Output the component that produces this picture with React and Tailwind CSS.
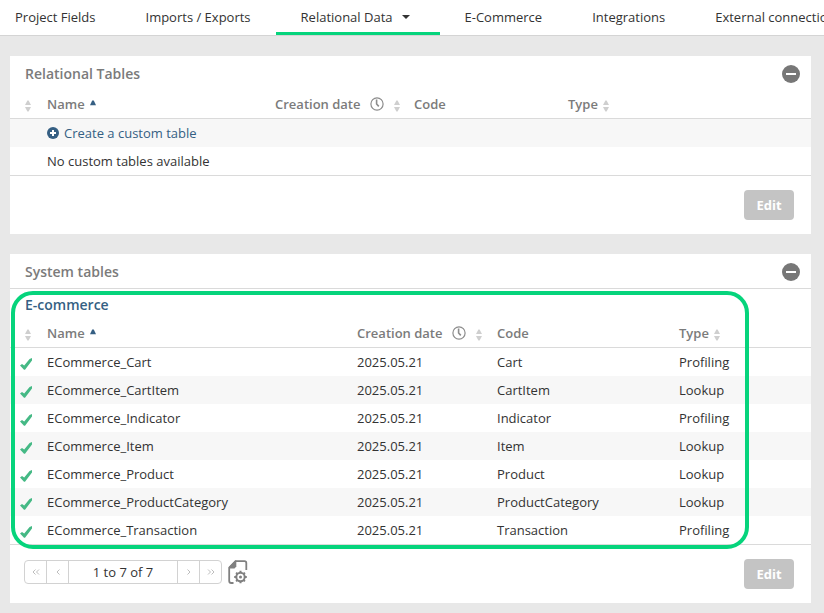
import React, { useState } from 'react';

const TABS = [
    { id: 'fields', name: 'Project Fields' },
    { id: 'imports', name: 'Imports / Exports' },
    { id: 'relational', name: 'Relational Data', hasMenu: true },
    { id: 'ecommerce', name: 'E-Commerce' },
    { id: 'integrations', name: 'Integrations' },
    { id: 'external', name: 'External connections' }
];

const SYSTEM_TABLES = [
    { code: 'Cart', date: '2025.05.21', type: 'Profiling' },
    { code: 'CartItem', date: '2025.05.21', type: 'Lookup' },
    { code: 'Indicator', date: '2025.05.21', type: 'Profiling' },
    { code: 'Item', date: '2025.05.21', type: 'Lookup' },
    { code: 'Product', date: '2025.05.21', type: 'Lookup' },
    { code: 'ProductCategory', date: '2025.05.21', type: 'Lookup' },
    { code: 'Transaction', date: '2025.05.21', type: 'Profiling' }
];

// --- Icons ---
const SortIcon = () => (
    <svg className="w-[6px] h-[12px] shrink-0" viewBox="0 0 6 12" fill="#cfcfcf" aria-hidden="true">
        <path d="M2.4 0.5 H3.6 L6 5 H0 Z M0 7 H6 L3.6 11.5 H2.4 Z" />
    </svg>
);

const SortUpIcon = () => (
    <svg className="w-[6px] h-[6px] shrink-0" viewBox="0 0 6 6" fill="#355f83" aria-hidden="true">
        <path d="M2.2 0.5 H3.8 L6 5.2 H0 Z" />
    </svg>
);

const ClockIcon = () => (
    <svg className="w-[14px] h-[14px] shrink-0" viewBox="0 0 14 14" fill="none" stroke="#8c8c8c" aria-hidden="true">
        <circle cx="7" cy="7" r="6.1" strokeWidth="1.2" />
        <path d="M6.6 2.6 V7 L8.8 9.4" strokeWidth="1.6" />
    </svg>
);

const CheckIcon = () => (
    <svg className="w-[12px] h-[12px]" viewBox="0 0 12 12" fill="#45b985" role="img" aria-label="Active">
        <path d="M0 7.4 L2 6 L4.2 7.6 L9.6 1 L12 0 V2.6 L5 11.8 H4 Z" />
    </svg>
);

const PlusIcon = () => (
    <svg className="w-[12px] h-[12px] shrink-0" viewBox="0 0 12 12" aria-hidden="true">
        <circle cx="6" cy="6" r="6" fill="#355f83" />
        <path d="M6 3 V9 M3 6 H9" stroke="#fff" strokeWidth="2" />
    </svg>
);

const CollapseIcon = () => (
    <svg className="w-[18px] h-[18px]" viewBox="0 0 18 18" aria-hidden="true">
        <circle cx="9" cy="9" r="9" fill="#777" />
        <path d="M4 9 H14" stroke="#fff" strokeWidth="2" />
    </svg>
);

const PageSettingsIcon = () => (
    <svg className="w-[20px] h-[24px]" viewBox="0 0 20 24" fill="none" stroke="#808080" aria-hidden="true">
        <path d="M5.5 23 H3.2 Q1.2 23 1.2 21 V7.5 L7.5 1.1 H16.5 Q18.3 1.1 18.3 3 V10" strokeWidth="1.8" />
        <path d="M1 8.5 V7 L7.3 0.6 H8.3 V6.5 L6.5 8.5 Z" fill="#808080" stroke="none" />
        <circle cx="12.5" cy="17" r="4.2" strokeWidth="2" />
        <circle cx="12.5" cy="17" r="1.5" fill="#808080" stroke="none" />
        <path
            d="M12.5 10.8 V13 M12.5 21 V23.2 M6.2 17 H8.5 M16.5 17 H18.8 M8.1 12.6 L9.7 14.2 M15.3 19.8 L16.9 21.4 M8.1 21.4 L9.7 19.8 M15.3 14.2 L16.9 12.6"
            strokeWidth="2"
        />
    </svg>
);

const Chevron = ({ double, left }) => (
    <svg
        className={left ? 'w-[8px] h-[6px] rotate-180' : 'w-[8px] h-[6px]'}
        viewBox="0 0 8 6"
        fill="none"
        stroke="#bdbdbd"
        aria-hidden="true"
    >
        <path d={double ? 'M1 0.5 L3.5 3 L1 5.5 M4.5 0.5 L7 3 L4.5 5.5' : 'M2.5 0.5 L5 3 L2.5 5.5'} />
    </svg>
);

// --- Panel pieces ---
const Panel = ({ title, children, ruled }) => {
    const [isOpen, setIsOpen] = useState(true);

    return (
        <section className="bg-white">
            <header
                className={`flex items-center justify-between pl-[15px] pr-[11px] pt-[2px] ${ruled ? 'h-[35px] border-b border-[#dadada]' : 'h-[34px]'}`}
            >
                <h2 className="text-[14px] leading-[20px] font-semibold text-[#7b7b7b]">{title}</h2>
                <button type="button" aria-label={`Collapse ${title}`} onClick={() => setIsOpen(!isOpen)}>
                    <CollapseIcon />
                </button>
            </header>
            {isOpen && children}
        </section>
    );
};

const HeaderRow = () => (
    <thead>
        <tr className="h-[29px] text-left text-[#7b7b7b] *:border-b *:border-[#dadada]">
            <th className="p-0 pl-[15px]">
                <button type="button" aria-label="Sort by status" className="flex pt-[3px]">
                    <SortIcon />
                </button>
            </th>
            <th className="p-0 font-semibold">
                <button type="button" className="flex items-center gap-[5px]">
                    Name
                    <span className="pb-[3px]"><SortUpIcon /></span>
                </button>
            </th>
            <th className="p-0 font-semibold">
                <button type="button" className="flex items-center gap-[10px] whitespace-nowrap">
                    Creation date
                    <ClockIcon />
                    <span className="pt-[3px]"><SortIcon /></span>
                </button>
            </th>
            <th className="p-0 font-semibold">Code</th>
            <th className="p-0 font-semibold">
                <button type="button" className="flex items-center gap-[5px]">
                    Type
                    <span className="pt-[3px]"><SortIcon /></span>
                </button>
            </th>
        </tr>
    </thead>
);

const EditButton = () => (
    <button type="button" className="ml-auto h-[30px] w-[50px] rounded-[4px] bg-[#c4c4c4] font-bold text-white">
        Edit
    </button>
);

const Pager = () => (
    <div className="flex h-[24px] divide-x divide-[#d2d2d2] rounded-[4px] border border-[#d2d2d2]">
        <button type="button" aria-label="First page" className="flex w-[22px] items-center justify-center"><Chevron double left /></button>
        <button type="button" aria-label="Previous page" className="flex w-[22px] items-center justify-center"><Chevron left /></button>
        <span className="flex w-[109px] items-center justify-center">1 to 7 of 7</span>
        <button type="button" aria-label="Next page" className="flex w-[22px] items-center justify-center"><Chevron /></button>
        <button type="button" aria-label="Last page" className="flex w-[21px] items-center justify-center"><Chevron double /></button>
    </div>
);

export default function App() {
    const [activeTab, setActiveTab] = useState('relational');

    return (
        <div className="min-h-screen bg-[#e8e8e8] font-['Open_Sans','Noto_Sans',sans-serif] text-[13px] leading-[18px] text-[#333]">
            <nav className="flex h-[36px] overflow-hidden border-b border-[#d4d4d4] bg-white">
                {TABS.map(tab => (
                    <button
                        key={tab.id}
                        type="button"
                        onClick={() => setActiveTab(tab.id)}
                        className={`flex shrink-0 items-center gap-[9px] border-b-[3px] pt-[2px] pr-[25px] pl-[25px] first:pl-[15px] ${activeTab === tab.id ? 'border-[#06d47c]' : 'border-transparent'}`}
                    >
                        {tab.name}
                        {tab.hasMenu && (
                            <svg className="mr-[5px] h-[4px] w-[8px]" viewBox="0 0 8 4" fill="#333" aria-hidden="true">
                                <path d="M0 0 H8 L4 4 Z" />
                            </svg>
                        )}
                    </button>
                ))}
            </nav>

            <main className="flex flex-col gap-[20px] pt-[20px] pr-[13px] pb-[10px] pl-[10px]">
                <Panel title="Relational Tables">
                    <table className="w-full table-fixed border-separate border-spacing-0">
                        <colgroup>
                            <col className="w-[37px]" />
                            <col className="w-[228px]" />
                            <col className="w-[139px]" />
                            <col className="w-[154px]" />
                            <col />
                        </colgroup>
                        <HeaderRow />
                        <tbody>
                            <tr className="h-[28px] bg-[#f7f7f7]">
                                <td />
                                <td colSpan={4} className="p-0">
                                    <a href="#create" className="flex items-center gap-[5px] text-[#355f83]">
                                        <PlusIcon />
                                        Create a custom table
                                    </a>
                                </td>
                            </tr>
                            <tr className="h-[29px] *:border-b *:border-[#dadada]">
                                <td />
                                <td colSpan={4} className="p-0">No custom tables available</td>
                            </tr>
                        </tbody>
                    </table>
                    <footer className="flex px-[17px] py-[14px]">
                        <EditButton />
                    </footer>
                </Panel>

                <Panel title="System tables" ruled>
                    <div className="relative">
                        <h3 className="h-[30px] pt-[6px] pl-[15px] text-[14px] leading-[20px] font-semibold text-[#355f83]">E-commerce</h3>
                        <table className="w-full table-fixed border-separate border-spacing-0">
                            <colgroup>
                                <col className="w-[37px]" />
                                <col className="w-[310px]" />
                                <col className="w-[140px]" />
                                <col className="w-[182px]" />
                                <col />
                            </colgroup>
                            <HeaderRow />
                            <tbody>
                                {SYSTEM_TABLES.map(row => (
                                    <tr key={row.code} className="h-[28px] even:bg-[#f7f7f7] last:h-[29px] last:*:border-b last:*:border-[#dadada]">
                                        <td className="p-0 pt-[3px] pl-[10px]"><CheckIcon /></td>
                                        <td className="p-0">ECommerce_{row.code}</td>
                                        <td className="p-0">{row.date}</td>
                                        <td className="p-0">{row.code}</td>
                                        <td className="p-0">{row.type}</td>
                                    </tr>
                                ))}
                            </tbody>
                        </table>
                        {/* highlight frame around the e-commerce tables */}
                        <div className="pointer-events-none absolute top-[2px] right-[62px] bottom-[-4px] left-[1px] rounded-[22px] border-4 border-[#06d47c]" />
                    </div>
                    <footer className="flex items-start px-[17px] py-[14px]">
                        <div className="-ml-[3px] flex gap-[6px] pt-px">
                            <Pager />
                            <button type="button" aria-label="Page settings"><PageSettingsIcon /></button>
                        </div>
                        <EditButton />
                    </footer>
                </Panel>
            </main>
        </div>
    );
}
